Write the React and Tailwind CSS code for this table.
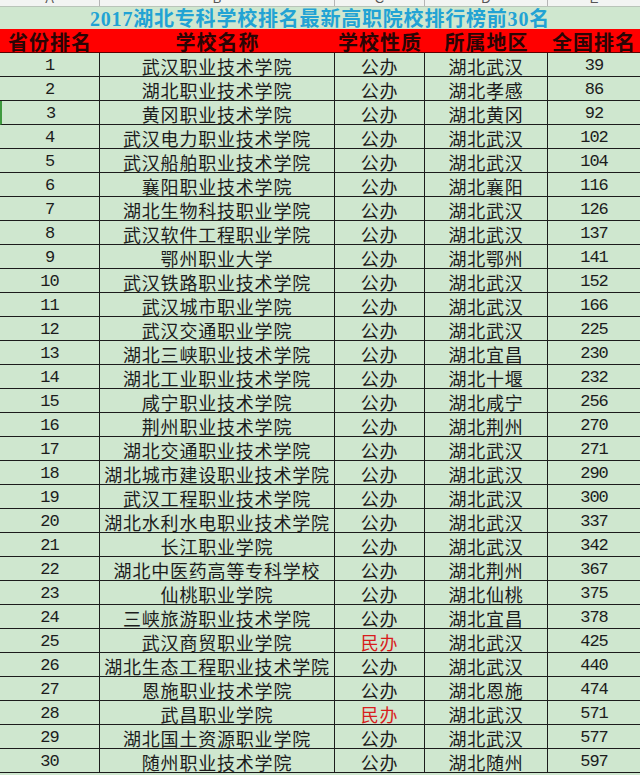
import React from "react";

const rows = [
  [1, "武汉职业技术学院", "公办", "湖北武汉", 39],
  [2, "湖北职业技术学院", "公办", "湖北孝感", 86],
  [3, "黄冈职业技术学院", "公办", "湖北黄冈", 92],
  [4, "武汉电力职业技术学院", "公办", "湖北武汉", 102],
  [5, "武汉船舶职业技术学院", "公办", "湖北武汉", 104],
  [6, "襄阳职业技术学院", "公办", "湖北襄阳", 116],
  [7, "湖北生物科技职业学院", "公办", "湖北武汉", 126],
  [8, "武汉软件工程职业学院", "公办", "湖北武汉", 137],
  [9, "鄂州职业大学", "公办", "湖北鄂州", 141],
  [10, "武汉铁路职业技术学院", "公办", "湖北武汉", 152],
  [11, "武汉城市职业学院", "公办", "湖北武汉", 166],
  [12, "武汉交通职业学院", "公办", "湖北武汉", 225],
  [13, "湖北三峡职业技术学院", "公办", "湖北宜昌", 230],
  [14, "湖北工业职业技术学院", "公办", "湖北十堰", 232],
  [15, "咸宁职业技术学院", "公办", "湖北咸宁", 256],
  [16, "荆州职业技术学院", "公办", "湖北荆州", 270],
  [17, "湖北交通职业技术学院", "公办", "湖北武汉", 271],
  [18, "湖北城市建设职业技术学院", "公办", "湖北武汉", 290],
  [19, "武汉工程职业技术学院", "公办", "湖北武汉", 300],
  [20, "湖北水利水电职业技术学院", "公办", "湖北武汉", 337],
  [21, "长江职业学院", "公办", "湖北武汉", 342],
  [22, "湖北中医药高等专科学校", "公办", "湖北荆州", 367],
  [23, "仙桃职业学院", "公办", "湖北仙桃", 375],
  [24, "三峡旅游职业技术学院", "公办", "湖北宜昌", 378],
  [25, "武汉商贸职业学院", "民办", "湖北武汉", 425],
  [26, "湖北生态工程职业技术学院", "公办", "湖北武汉", 440],
  [27, "恩施职业技术学院", "公办", "湖北恩施", 474],
  [28, "武昌职业学院", "民办", "湖北武汉", 571],
  [29, "湖北国土资源职业学院", "公办", "湖北武汉", 577],
  [30, "随州职业技术学院", "公办", "湖北随州", 597],
];

const cjk = "font-['Noto_Sans_CJK_SC',sans-serif]";
const num = "font-['Liberation_Mono','DejaVu_Sans_Mono',monospace]";
const cols = "grid grid-cols-[100px_235px_90px_123px_92px]";

const Cell = ({ children, last, className = "" }) => (
  <div
    className={`h-6 flex items-center justify-center pt-[3px] border-b border-[#1c1c1c] whitespace-nowrap ${
      last ? "" : "border-r"
    } ${className}`}
  >
    {children}
  </div>
);

export default function App() {
  return (
    <div className="w-[640px] h-[775px] overflow-hidden bg-[#cfe7cf] text-[#1c1c1c]">
      {/* spreadsheet column letters, mostly cut off */}
      <div className={`${cols} h-[7px] overflow-hidden bg-[#f2f4f2] border-b border-[#b9c4b9]`}>
        {["A", "B", "C", "D", "E"].map((l, i) => (
          <div
            key={l}
            className={`flex justify-center ${i < 4 ? "border-r border-[#b5b5b5]" : ""}`}
          >
            <span className="-mt-[9px] text-[13px] leading-4 text-[#555] font-['Liberation_Sans',sans-serif]">
              {l}
            </span>
          </div>
        ))}
      </div>

      {/* title */}
      <div className="h-[22px] flex items-center justify-center pt-[2px]">
        <h1 className="text-[20px] leading-5 font-bold text-[#22a3d4] font-['Liberation_Serif','Noto_Sans_CJK_SC',serif] tracking-[0.8px]">
          2017湖北专科学校排名最新高职院校排行榜前30名
        </h1>
      </div>

      {/* header */}
      <div className={`${cols} h-6 bg-[#ff0000] border-b border-[#5a0000]`}>
        {["省份排名", "学校名称", "学校性质", "所属地区", "全国排名"].map((h) => (
          <div
            key={h}
            className={`flex items-center justify-center pt-[2px] ${cjk} font-bold text-[20px] leading-5 tracking-[1px] text-[#2a0505]`}
          >
            {h}
          </div>
        ))}
      </div>

      {/* body */}
      {rows.map(([rank, name, type, area, nat]) => (
        <div key={rank} className={cols}>
          <Cell className={`${num} text-[17px] tracking-[-1px] ${rank === 3 ? "border-l-2 border-l-[#3f9a3f]" : ""}`}>
            {rank}
          </Cell>
          <Cell className={`${cjk} text-[18px] tracking-[0.8px] leading-6`}>{name}</Cell>
          <Cell
            className={`${cjk} text-[18px] tracking-[0.8px] leading-6 ${
              type === "民办" ? "text-[#d81e1e]" : ""
            }`}
          >
            {type}
          </Cell>
          <Cell className={`${cjk} text-[18px] tracking-[0.8px] leading-6`}>{area}</Cell>
          <Cell last className={`${num} text-[17px] tracking-[-1px]`}>
            {nat}
          </Cell>
        </div>
      ))}
    </div>
  );
}
